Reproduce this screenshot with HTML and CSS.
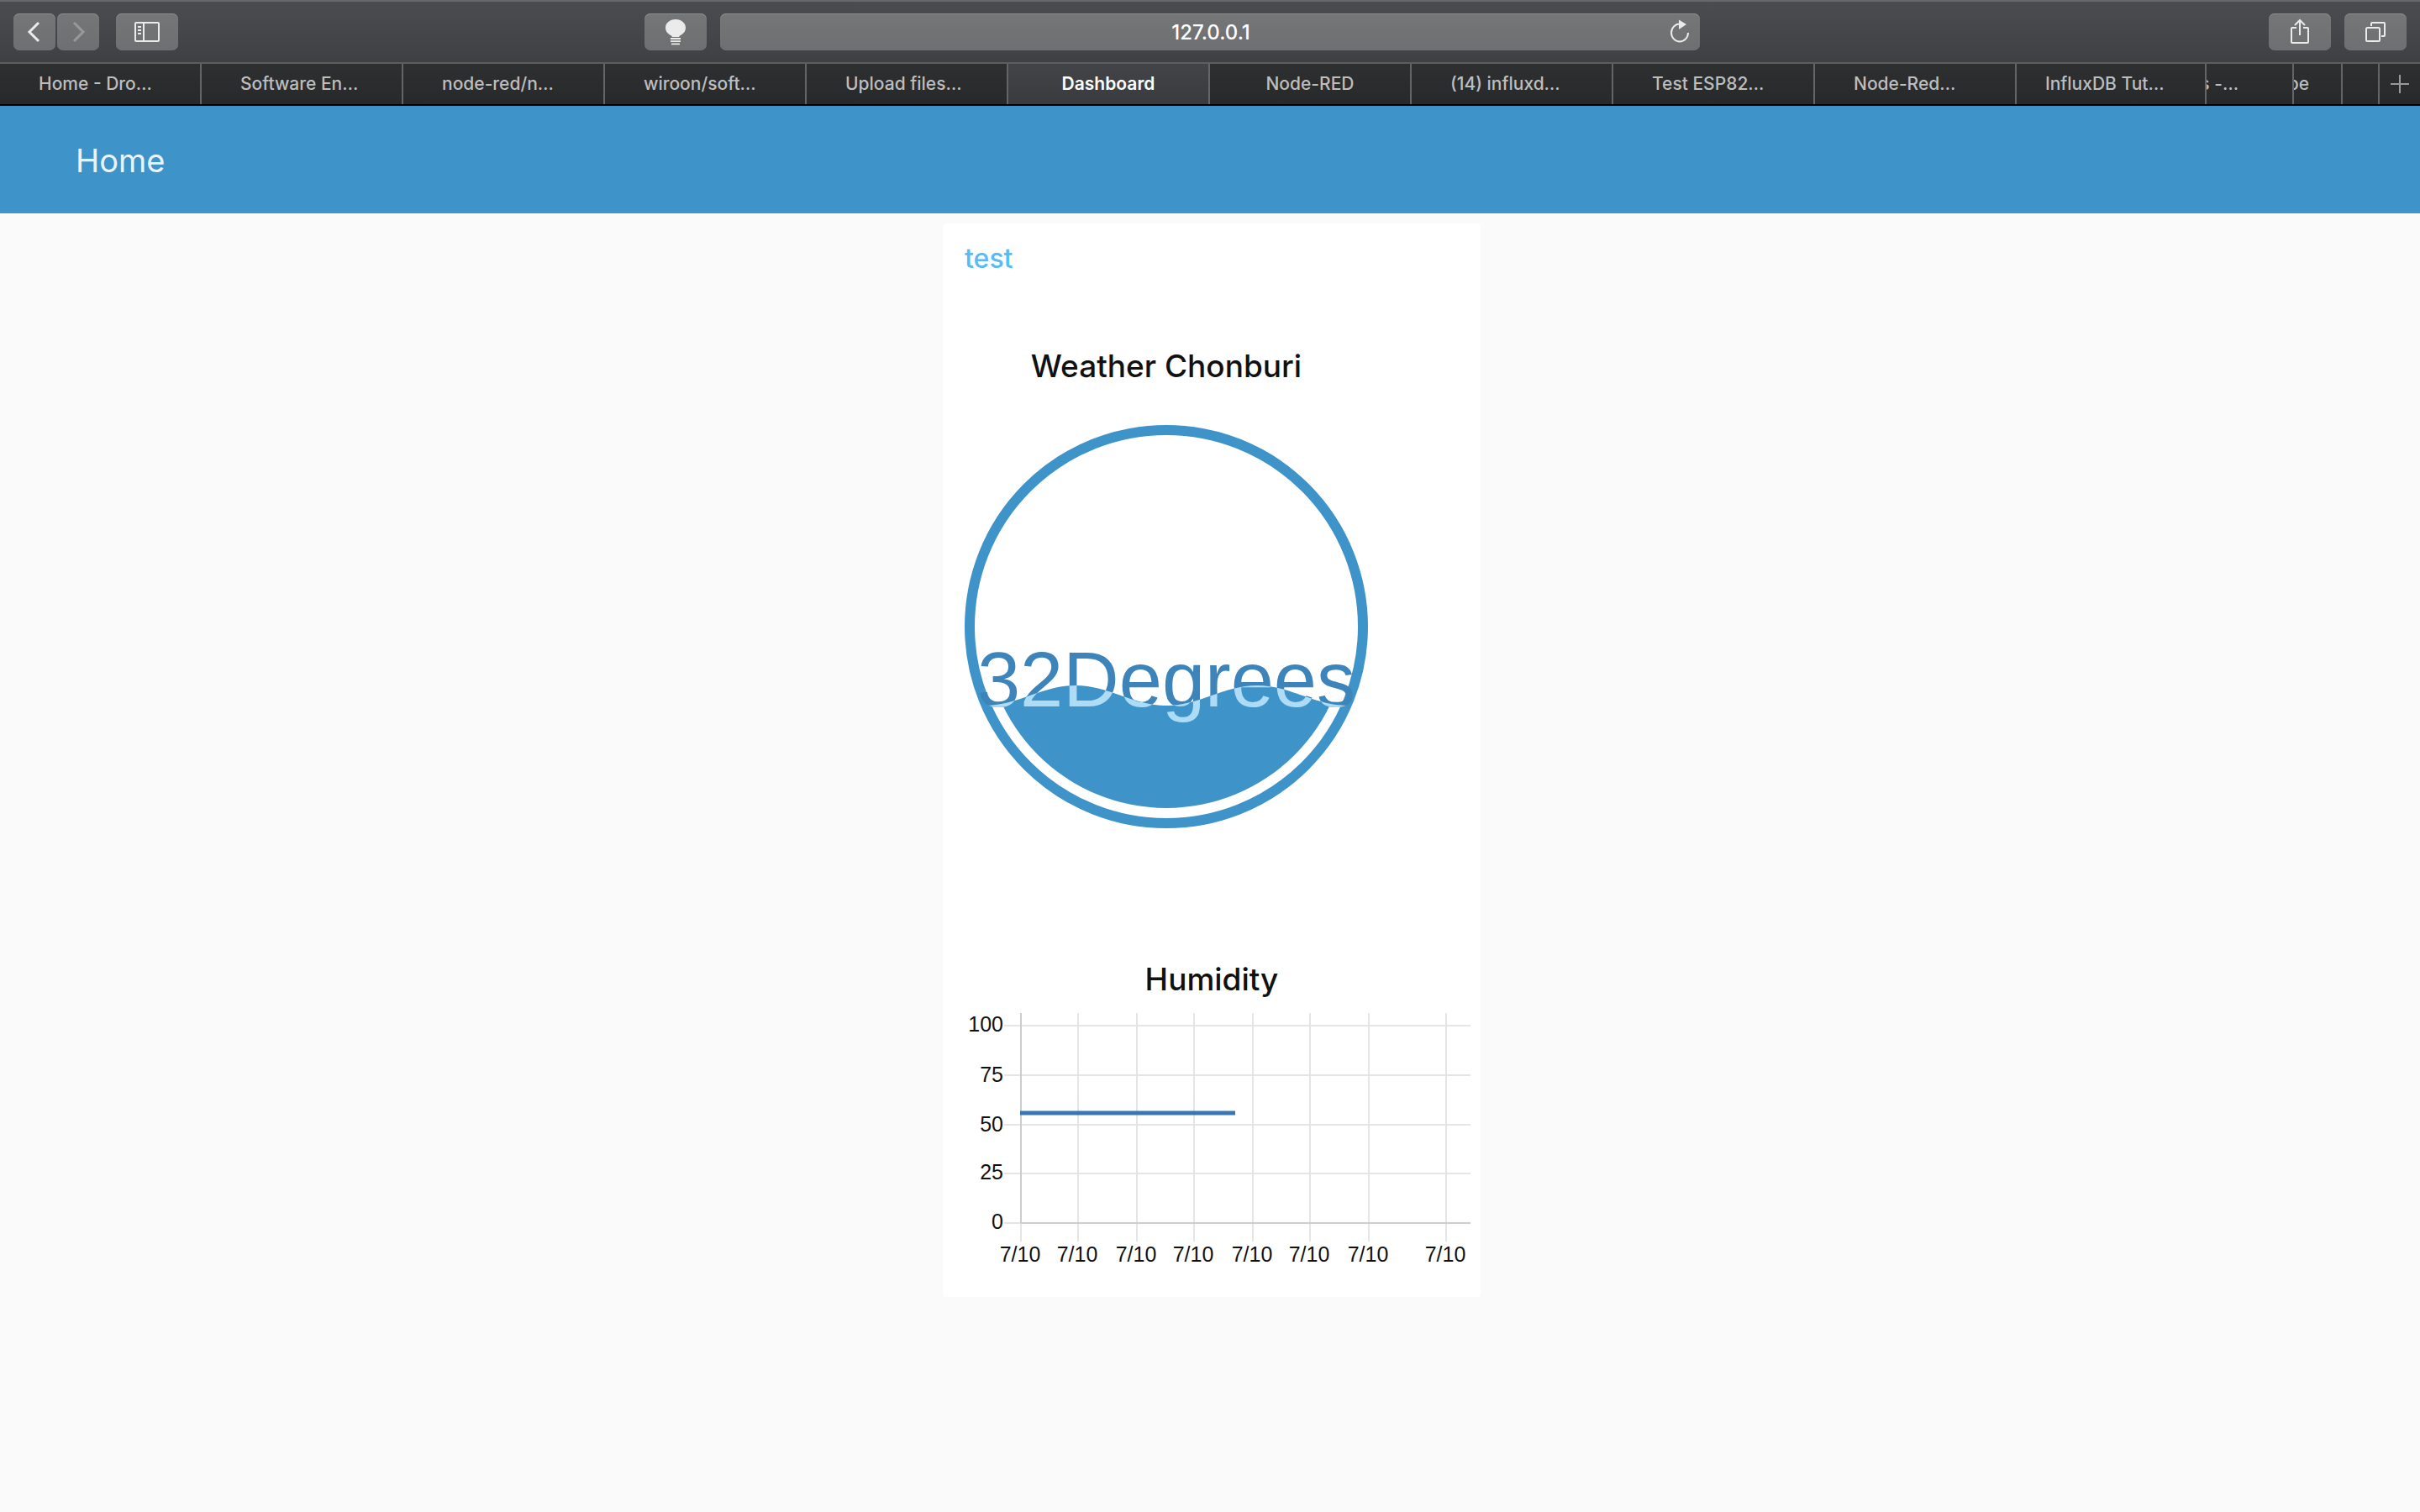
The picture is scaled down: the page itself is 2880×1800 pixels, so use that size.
FILE: index.html
```html
<!DOCTYPE html>
<html lang="en">
<head>
<meta charset="utf-8">
<title>Dashboard</title>
<link rel="stylesheet" href="styles.css">
</head>
<body>
<div class="browser">
  <div class="toolbar">
    <div class="tools tools-left">
      <div class="nav-pair">
        <button class="tool tool-narrow" type="button" aria-label="Back"><svg class="icon" width="34" height="34" viewBox="0 0 34 34"><path d="M22 6 11 17 22 28" stroke-width="3"/></svg></button>
        <button class="tool tool-narrow tool-off" type="button" aria-label="Forward"><svg class="icon" width="34" height="34" viewBox="0 0 34 34"><path d="M12 6 23 17 12 28" stroke-width="3"/></svg></button>
      </div>
      <button class="tool" type="button" aria-label="Sidebar"><svg class="icon" width="34" height="34" viewBox="0 0 34 34"><rect x="3" y="6" width="28" height="22" rx="1"/><path d="M13 6v22M6 11h4M6 15h4M6 19h4"/></svg></button>
      <button class="tool tool-bulb" type="button" aria-label="Lights"><svg class="icon" width="34" height="34" viewBox="0 0 34 34"><path class="solid" d="M17 2c7 0 12 4.500 12 10 0 4.500-3 7.500-7 9.500l-1 1.500h-8l-1-1.500c-4-2-7-5-7-9.500C5 6.500 10 2 17 2z"/><path d="M11 25h12M11 28.200h12M12 31.300h10" stroke-width="1.800"/></svg></button>
    </div>
    <div class="address">
      <input class="address-input" type="text" value="127.0.0.1" aria-label="Address">
      <button class="reload" type="button" aria-label="Reload"><svg class="icon" width="34" height="34" viewBox="0 0 34 34"><path d="M28 18a10 10.500 0 1 1-10-10.500"/><path class="solid" d="M17 2.500 26 8l-9 6z"/></svg></button>
    </div>
    <div class="tools tools-right">
      <button class="tool" type="button" aria-label="Share"><svg class="icon" width="34" height="34" viewBox="0 0 34 34"><path d="M13 12H8a1 1 0 0 0-1 1v16a1 1 0 0 0 1 1h18a1 1 0 0 0 1-1V13a1 1 0 0 0-1-1h-5M17 21V3M11 9l6-6 6 6"/></svg></button>
      <button class="tool" type="button" aria-label="Show all tabs"><svg class="icon" width="34" height="34" viewBox="0 0 34 34"><rect x="6" y="12" width="16" height="16" rx="1.500"/><path d="M12 10V7a1 1 0 0 1 1-1h14a1 1 0 0 1 1 1v14a1 1 0 0 1-1 1h-3"/></svg></button>
    </div>
  </div>
  <nav class="tabs">
    <a class="tab" href="#">Home - Dro…</a>
    <a class="tab" href="#">Software En…</a>
    <a class="tab" href="#">node-red/n…</a>
    <a class="tab" href="#">wiroon/soft…</a>
    <a class="tab" href="#">Upload files…</a>
    <a class="tab tab-full tab-active" href="#">Dashboard</a>
    <a class="tab tab-full" href="#">Node-RED</a>
    <a class="tab" href="#">(14) influxd…</a>
    <a class="tab" href="#">Test ESP82…</a>
    <a class="tab" href="#">Node-Red…</a>
    <a class="tab tab-stack-1" href="#">InfluxDB Tut…</a>
    <a class="tab tab-stack-2" href="#"><span class="tab-clip">s -…</span></a>
    <a class="tab tab-stack-3" href="#"><span class="tab-clip">be</span></a>
    <a class="tab tab-stack-4" href="#" aria-label="Stacked tab"></a>
    <button class="tab-add" type="button" aria-label="New tab"><svg class="icon" width="24" height="24" viewBox="0 0 24 24"><path d="M12 1v22M1 12h22"/></svg></button>
  </nav>
</div>

<header class="app-bar"><h1 class="app-title">Home</h1></header>

<main class="page">
  <section class="card">
    <h2 class="card-title">test</h2>
    <div class="gauge">
      <h3 class="widget-title">Weather Chonburi</h3>
      <svg class="gauge-drawing" viewBox="0 0 480 480" role="img" aria-label="32 Degrees">
        <defs>
          <clipPath id="wave"><path d="M0 310 C0 310-20 334 24 334 C63 334 93 310 132 310 S201 334 240 334 S309 310 348 310 S417 334 456 334 H480 V480 H0 V334z"/></clipPath>
        </defs>
        <circle class="gauge-ring" cx="240" cy="240" r="234"/>
        <text class="gauge-text" x="240" y="335">32Degrees</text>
        <g clip-path="url(#wave)">
          <circle class="gauge-fill" cx="240" cy="240" r="216"/>
          <text class="gauge-text gauge-text-wet" x="240" y="335">32Degrees</text>
        </g>
      </svg>
    </div>
    <div class="chart">
      <h3 class="widget-title">Humidity</h3>
      <svg class="chart-drawing" viewBox="0 0 640 320" role="img" aria-label="Humidity chart">
        <path class="grid" d="M73 25H628M73 84H628M73 143H628M73 201H628M73 260H628M93 10V282M161 10V282M231 10V282M299 10V282M369 10V282M437 10V282M507 10V282M599 10V282"/>
        <path class="grid" d="M93 10V260M93 260H628"/>
        <path class="series" d="M92 129H348"/>
        <g class="labels-y">
          <text x="72" y="32">100</text><text x="72" y="92">75</text><text x="72" y="151">50</text><text x="72" y="208">25</text><text x="72" y="267">0</text>
        </g>
        <g class="labels-x">
          <text x="92" y="306">7/10</text><text x="160" y="306">7/10</text><text x="230" y="306">7/10</text><text x="298" y="306">7/10</text><text x="368" y="306">7/10</text><text x="436" y="306">7/10</text><text x="506" y="306">7/10</text><text x="598" y="306">7/10</text>
        </g>
      </svg>
    </div>
  </section>
</main>
</body>
</html>
```
FILE: styles.css
```css
* { box-sizing: border-box; }

body {
  margin: 0;
  min-height: 100vh;
  background: #fafafa;
  font-family: Inter, "Liberation Sans", sans-serif;
  color: #111;
}

h1, h2, h3 { margin: 0; }

button {
  display: flex;
  align-items: center;
  justify-content: center;
  padding: 0;
  border: 0;
  color: inherit;
  background: none;
}

.browser { color: #ebebeb; }

.toolbar {
  display: grid;
  grid-template-columns: 1fr minmax(0, 1166px) 1fr;
  align-items: center;
  height: 76px;
  padding: 0 16px;
  border-top: 2px solid #66686b;
  border-bottom: 2px solid #5c5e60;
  background: linear-gradient(#4a4c4f, #3f4043);
}

.tools { display: flex; }
.tools-left { gap: 20px; padding-right: 16px; }
.tools-right { gap: 16px; justify-content: flex-end; }
.nav-pair { display: flex; gap: 2px; }
.tool-bulb { margin-left: auto; }

.tool,
.address {
  height: 44px;
  border-radius: 7px;
  background: linear-gradient(#757678, #6e6f71);
  box-shadow: inset 0 1px #8b8c8e;
}

.tool { width: 74px; }
.tool-narrow { width: 50px; }
.tool-off { color: #98999b; }

.icon {
  display: block;
  fill: none;
  stroke: currentColor;
  stroke-width: 2;
}

.icon .solid { fill: currentColor; stroke: none; }

.address { display: flex; padding-left: 52px; }

.address-input {
  flex: 1;
  min-width: 0;
  padding: 2px 0 0;
  border: 0;
  background: none;
  color: #fff;
  font: 500 24px/42px Inter, sans-serif;
  text-align: center;
}

.reload { width: 50px; }

.tabs {
  display: grid;
  grid-template-columns: repeat(10, 240fr) 226fr 104fr 58fr 44fr 48fr;
  height: 50px;
  border-bottom: 2px solid #000;
  background: linear-gradient(#2e2f31, #28292b);
  font-size: 21px;
  font-weight: 500;
  line-height: 48px;
}

.tab {
  min-width: 0;
  padding-left: 46px;
  border-right: 2px solid #646567;
  overflow: hidden;
  color: #bdbebe;
  text-decoration: none;
  white-space: nowrap;
}

.tab-full { padding: 0; text-align: center; }
.tab-active { background: linear-gradient(#424447, #3a3b3e); color: #fff; font-weight: 600; }
.tab-stack-1 { padding-left: 34px; }
.tab-stack-2 { padding: 0 64px 0 0; }
.tab-stack-3 { padding: 0 38px 0 0; }
.tab-stack-4 { padding: 0; }
.tab-clip { display: flex; justify-content: flex-end; overflow: hidden; }
.tab-add { color: #98999b; }

.app-bar {
  display: flex;
  align-items: center;
  height: 128px;
  padding: 2px 90px 0;
  background: #3e93c9;
  color: #e8f3fa;
}

.app-title { font-size: 38px; font-weight: 400; line-height: 48px; }

.page { display: flex; justify-content: center; padding: 12px 0; }

.card {
  width: 640px;
  max-width: 100%;
  margin-left: 4px;
  padding-bottom: 28px;
  border-radius: 4px;
  background: #fff;
}

.card-title {
  padding: 22px 26px 18px;
  color: #56bbf6;
  font-size: 32px;
  font-weight: 500;
  line-height: 40px;
}

.widget-title {
  font-size: 37px;
  font-weight: 500;
  line-height: 48px;
  text-align: center;
}

.gauge {
  width: 532px;
  padding: 66px 26px 0;
}

.gauge-drawing { display: block; width: 100%; margin-top: 46px; }
.gauge-ring { fill: none; stroke: #3e93c9; stroke-width: 12; }
.gauge-fill { fill: #3e93c9; }

.gauge-text {
  fill: #3c84ba;
  font-family: "Liberation Sans", Arial, sans-serif;
  font-size: 92px;
  text-anchor: middle;
}

.gauge-text-wet { fill: #aedbf6; }

.chart { padding-top: 156px; }
.chart-drawing { display: block; width: 100%; margin-top: 6px; }
.grid { fill: none; stroke: #000; stroke-opacity: 0.1; stroke-width: 2; }
.series { fill: none; stroke: #3877b2; stroke-width: 5; }

.labels-x,
.labels-y {
  fill: #111;
  font-family: "Liberation Sans", Arial, sans-serif;
  font-size: 25px;
}

.labels-x { text-anchor: middle; }
.labels-y { text-anchor: end; }
```
